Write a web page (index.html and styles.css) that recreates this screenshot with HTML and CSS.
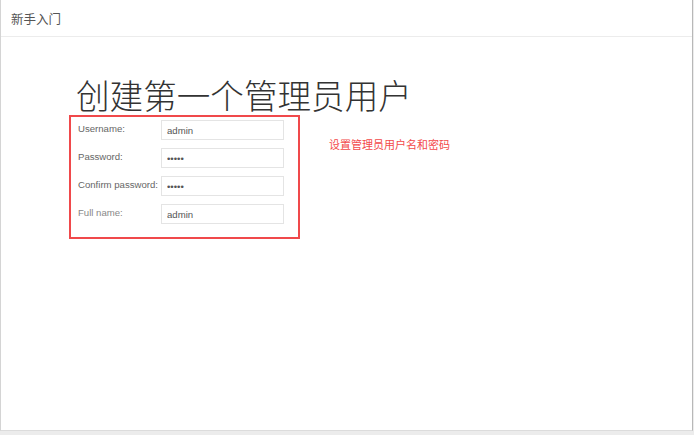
FILE: index.html
```html
<!DOCTYPE html>
<html lang="zh-CN">
<head>
<meta charset="utf-8">
<title>新手入门</title>
<link rel="stylesheet" href="styles.css">
</head>
<body>
<div class="page">
  <div class="header">新手入门</div>
  <div class="main">
    <h1 class="title">创建第一个管理员用户</h1>
    <div class="form-area">
      <div class="form-box">
        <div class="row">
          <label class="label">Username:</label>
          <input class="field" type="text" value="admin" readonly>
        </div>
        <div class="row">
          <label class="label">Password:</label>
          <input class="field" type="password" value="admin" readonly>
        </div>
        <div class="row">
          <label class="label">Confirm password:</label>
          <input class="field" type="password" value="admin" readonly>
        </div>
        <div class="row">
          <label class="label label-light">Full name:</label>
          <input class="field" type="text" value="admin" readonly>
        </div>
      </div>
      <div class="note">设置管理员用户名和密码</div>
    </div>
  </div>
</div>
</body>
</html>
```
FILE: styles.css
```css
html, body {
  margin: 0;
  padding: 0;
}
body {
  background: #ececec;
  font-family: "Liberation Sans", "Noto Sans CJK SC", sans-serif;
  width: 694px;
  height: 435px;
  overflow: hidden;
}
.page {
  width: 691px;
  height: 430px;
  background: #fff;
  border-left: 1px solid #d4d4d4;
  border-right: 1px solid #b8b8b8;
  border-bottom: 1px solid #dcdcdc;
  display: flex;
  flex-direction: column;
}
.header {
  height: 37px;
  box-sizing: border-box;
  border-bottom: 1px solid #ececec;
  display: flex;
  align-items: center;
  padding-left: 10px;
  padding-top: 1px;
  font-family: "Noto Sans CJK SC", sans-serif;
  font-size: 12.5px;
  color: #555;
}
.main {
  padding-top: 41px;
  padding-left: 68px;
}
.title {
  margin: 0 0 3px 7px;
  font-family: "Noto Sans CJK SC", sans-serif;
  font-weight: 300;
  font-size: 33.6px;
  line-height: 34px;
  color: #333;
  letter-spacing: 0;
}
.form-area {
  display: flex;
  align-items: flex-start;
}
.form-box {
  width: 231px;
  height: 124px;
  box-sizing: border-box;
  border: 2px solid #f0494b;
  padding: 3px 0 0 7px;
  display: flex;
  flex-direction: column;
  gap: 8px;
}
.row {
  display: flex;
  align-items: center;
  height: 20px;
}
.label {
  width: 83px;
  font-size: 9.6px;
  color: #666;
  white-space: nowrap;
  margin-top: -3px;
}
.label-light {
  color: #888;
}
.field {
  width: 123px;
  height: 20px;
  box-sizing: border-box;
  border: 1px solid #e4e4e4;
  padding: 0 5px;
  margin: 0;
  font-family: "Liberation Sans", sans-serif;
  font-size: 9.6px;
  color: #555;
  background: #fff;
  outline: none;
}
.note {
  margin-left: 29px;
  margin-top: 22px;
  font-family: "Noto Sans CJK SC", sans-serif;
  font-size: 11px;
  line-height: 14px;
  color: #f34a4a;
}
```
